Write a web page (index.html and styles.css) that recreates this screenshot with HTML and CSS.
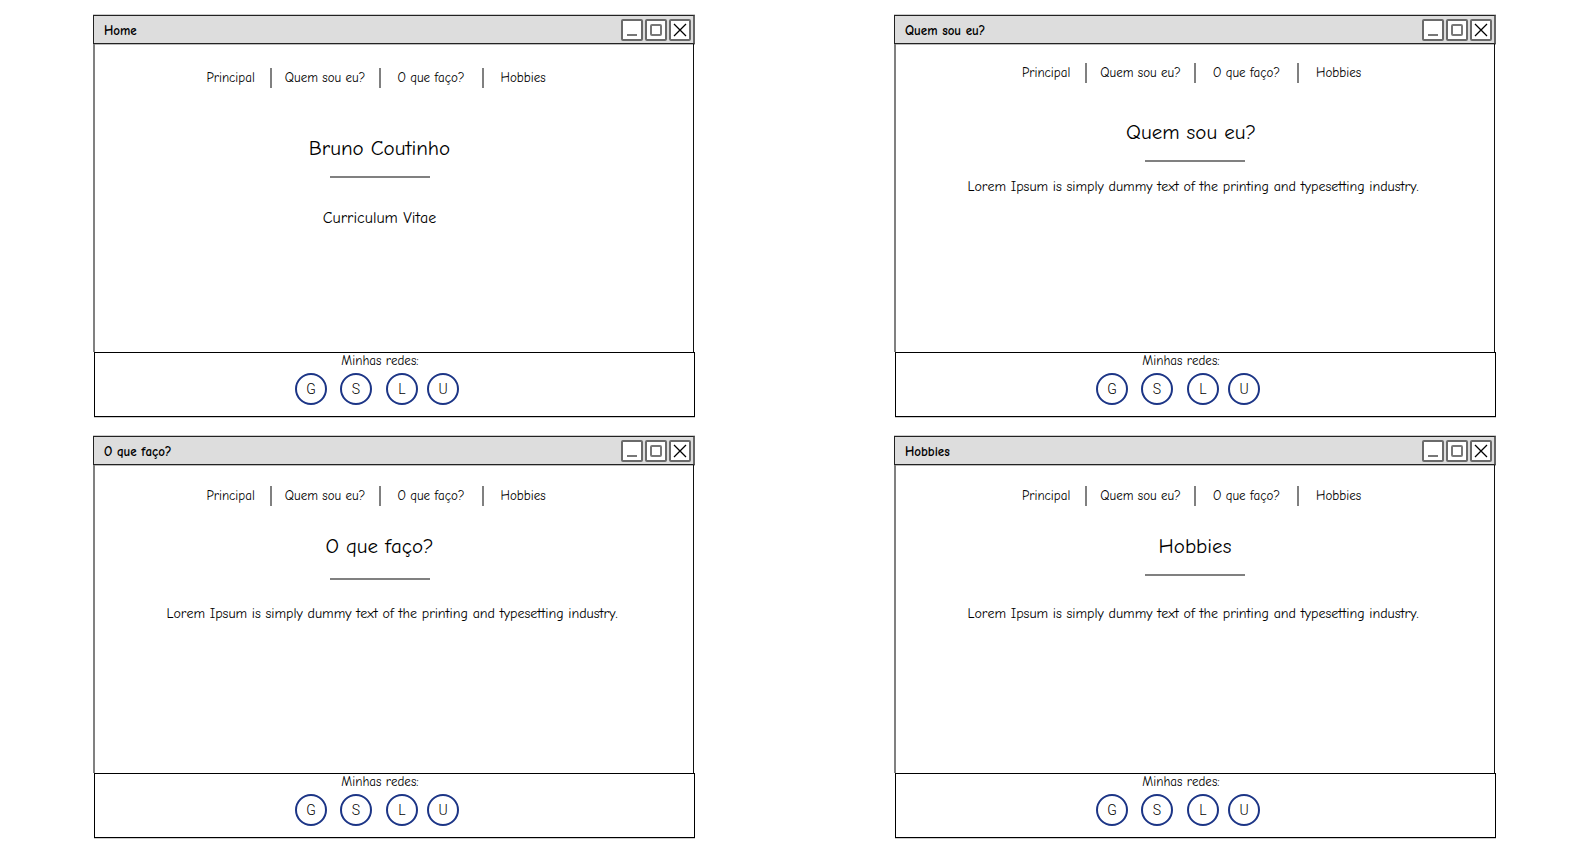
FILE: index.html
```html
<!DOCTYPE html>
<html lang="pt-BR">
<head>
<meta charset="utf-8">
<title>Bruno Coutinho</title>
<link rel="stylesheet" href="styles.css">
</head>
<body>
<svg class="symbols" aria-hidden="true">
  <symbol id="min" viewBox="0 0 22 22"><path d="M6 16H16" stroke="#777" stroke-width="2"/></symbol>
  <symbol id="max" viewBox="0 0 22 22"><rect x="6" y="6" width="10" height="10" rx="1" fill="none" stroke="#777" stroke-width="2"/></symbol>
  <symbol id="close" viewBox="0 0 22 22"><path d="M5 5L17 17M17 5L5 17" stroke="#000" stroke-width="1.3"/></symbol>
</svg>
<main class="board">
  <section class="window window-home">
    <header class="titlebar">
      <h2 class="title">Home</h2>
      <button class="control" aria-label="Minimizar"><svg><use href="#min"/></svg></button>
      <button class="control" aria-label="Maximizar"><svg><use href="#max"/></svg></button>
      <button class="control" aria-label="Fechar"><svg><use href="#close"/></svg></button>
    </header>
    <div class="content shifted">
      <nav class="menu"><a href="#">Principal</a><a href="#">Quem sou eu?</a><a href="#">O que faço?</a><a href="#">Hobbies</a></nav>
      <h1 class="heading">Bruno Coutinho</h1>
      <hr class="rule">
      <p class="subtitle">Curriculum Vitae</p>
    </div>
    <footer class="footer">
      <p class="label">Minhas redes:</p>
      <div class="socials"><a href="#">G</a><a href="#">S</a><a href="#">L</a><a href="#">U</a></div>
    </footer>
  </section>

  <section class="window window-about">
    <header class="titlebar">
      <h2 class="title">Quem sou eu?</h2>
      <button class="control" aria-label="Minimizar"><svg><use href="#min"/></svg></button>
      <button class="control" aria-label="Maximizar"><svg><use href="#max"/></svg></button>
      <button class="control" aria-label="Fechar"><svg><use href="#close"/></svg></button>
    </header>
    <div class="content">
      <nav class="menu"><a href="#">Principal</a><a href="#">Quem sou eu?</a><a href="#">O que faço?</a><a href="#">Hobbies</a></nav>
      <h1 class="heading">Quem sou eu?</h1>
      <hr class="rule">
      <p class="text">Lorem Ipsum is simply dummy text of the printing and typesetting industry.</p>
    </div>
    <footer class="footer">
      <p class="label">Minhas redes:</p>
      <div class="socials"><a href="#">G</a><a href="#">S</a><a href="#">L</a><a href="#">U</a></div>
    </footer>
  </section>

  <section class="window window-work">
    <header class="titlebar">
      <h2 class="title">O que faço?</h2>
      <button class="control" aria-label="Minimizar"><svg><use href="#min"/></svg></button>
      <button class="control" aria-label="Maximizar"><svg><use href="#max"/></svg></button>
      <button class="control" aria-label="Fechar"><svg><use href="#close"/></svg></button>
    </header>
    <div class="content">
      <div class="shifted">
        <nav class="menu"><a href="#">Principal</a><a href="#">Quem sou eu?</a><a href="#">O que faço?</a><a href="#">Hobbies</a></nav>
        <h1 class="heading">O que faço?</h1>
        <hr class="rule">
      </div>
      <p class="text">Lorem Ipsum is simply dummy text of the printing and typesetting industry.</p>
    </div>
    <footer class="footer">
      <p class="label">Minhas redes:</p>
      <div class="socials"><a href="#">G</a><a href="#">S</a><a href="#">L</a><a href="#">U</a></div>
    </footer>
  </section>

  <section class="window window-hobbies">
    <header class="titlebar">
      <h2 class="title">Hobbies</h2>
      <button class="control" aria-label="Minimizar"><svg><use href="#min"/></svg></button>
      <button class="control" aria-label="Maximizar"><svg><use href="#max"/></svg></button>
      <button class="control" aria-label="Fechar"><svg><use href="#close"/></svg></button>
    </header>
    <div class="content">
      <nav class="menu"><a href="#">Principal</a><a href="#">Quem sou eu?</a><a href="#">O que faço?</a><a href="#">Hobbies</a></nav>
      <h1 class="heading">Hobbies</h1>
      <hr class="rule">
      <p class="text">Lorem Ipsum is simply dummy text of the printing and typesetting industry.</p>
    </div>
    <footer class="footer">
      <p class="label">Minhas redes:</p>
      <div class="socials"><a href="#">G</a><a href="#">S</a><a href="#">L</a><a href="#">U</a></div>
    </footer>
  </section>
</main>
</body>
</html>
```
FILE: styles.css
```css
* { box-sizing: border-box; }

body {
  margin: 0;
  background: #fff;
  color: #000;
  font-family: "Comic Sans MS", "Comic Neue", Lato, sans-serif;
  font-size: 14px;
  line-height: 20px;
  font-kerning: none;
}

h1, h2, p { margin: 0; font-weight: 400; }
a { color: inherit; text-decoration: none; }
.symbols { display: none; }

.board {
  display: grid;
  grid-template-columns: 1fr 1fr;
  grid-auto-rows: 1fr;
  gap: 19px 199px;
  min-height: 100vh;
  padding: 15px 86px 19px 93px;
}

.window { display: flex; flex-direction: column; }

.titlebar {
  display: flex;
  align-items: center;
  gap: 2px;
  height: 29px;
  padding: 1px 2px 0 10px;
  background: #ddd;
  border: 1px solid #222;
  border-right: 2px solid #666;
  box-shadow: 0 -1px #ccc, 0 1px #bbb;
}

.title {
  flex: 1;
  padding-top: 2px;
  font-size: 13px;
  font-weight: 700;
}

.control {
  width: 22px;
  height: 22px;
  padding: 0;
  background: #fff;
  border: 2px solid #6a6a6a;
  border-radius: 2px;
}

.control svg { display: block; width: 22px; height: 22px; margin: -2px; }

.content {
  flex: 1;
  margin-right: 1px;
  border-left: 2px solid #808080;
  border-right: 1px solid #111;
  text-align: center;
}

.shifted { padding-right: 29px; }

.menu {
  display: flex;
  justify-content: center;
  padding-right: 6px;
  font-size: 13px;
}

.menu a { width: 103px; border-left: 2px solid #808080; }
.menu a:first-child { width: 63px; border-left: 0; text-align: left; }
.menu a:nth-child(2) { width: 109px; }
.menu a:last-child { width: 65px; padding: 0 0 0 17px; text-align: left; white-space: nowrap; }

.heading { font-size: 21px; line-height: 28px; }

.rule {
  width: 100px;
  height: 2px;
  margin: 14px auto 0;
  background: #808080;
  border: 0;
}

.subtitle { margin-top: 30px; font-size: 16px; }
.text { padding-right: 4px; }

.window-home .menu { margin-top: 24px; }
.window-home .heading { margin-top: 46px; }

.window-about .menu { margin-top: 19px; }
.window-about .heading { margin-top: 35px; padding-right: 8px; }
.window-about .text { margin-top: 15px; }

.window-work .menu { margin-top: 21px; }
.window-work .heading { margin-top: 26px; }
.window-work .rule { margin-top: 18px; }
.window-work .text { margin-top: 24px; }

.window-hobbies .menu { margin-top: 21px; }
.window-hobbies .heading { margin-top: 26px; }
.window-hobbies .text { margin-top: 28px; }

.footer {
  height: 65px;
  margin-left: 1px;
  padding-right: 29px;
  border: 1px solid #000;
  box-shadow: 0 1px #ccc;
}

.label { margin-top: -2px; font-size: 13px; text-align: center; }

.socials {
  display: grid;
  grid-template-columns: 45px 46px 41px 32px;
  justify-content: center;
  margin-top: 2px;
  padding-right: 6px;
}

.socials a {
  width: 32px;
  height: 32px;
  border: 2px solid #1c3586;
  border-radius: 50%;
  font-family: Roboto, sans-serif;
  font-weight: 300;
  line-height: 28px;
  text-align: center;
}
```
